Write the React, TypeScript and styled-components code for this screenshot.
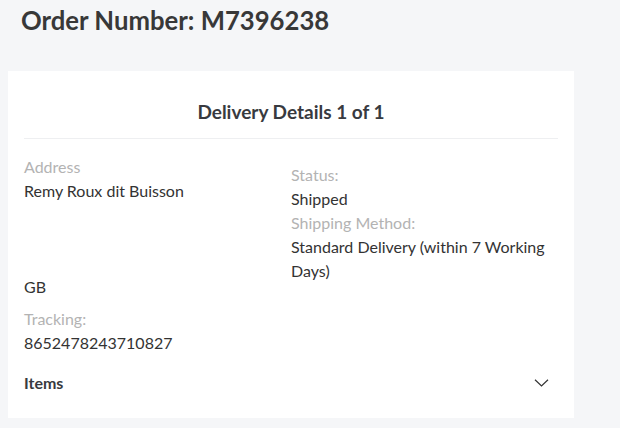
import React from 'react';
import styled, { createGlobalStyle } from 'styled-components';

const GlobalStyle = createGlobalStyle`
	html, body {
		margin: 0;
		padding: 0;
		background: #f5f6f8;
		font-family: Lato, "Open Sans", "Liberation Sans", sans-serif;
		color: #333;
	}
`;

const Page = styled.div`
	width: 620px;
	height: 428px;
	padding: 0 46px 0 8px;
	box-sizing: border-box;
	overflow: hidden;
`;

const Title = styled.h1`
	margin: 0 0 35px;
	padding: 4px 0 0 13px;
	font-size: 25.7px;
	line-height: 32px;
	font-weight: 700;
	color: #383838;
`;

const Card = styled.section`
	background: #fff;
	padding: 29px 16px 0 16px;
	height: 347px;
	box-sizing: border-box;
`;

const CardHeading = styled.h2`
	margin: 0;
	padding: 0 0 14px;
	border-bottom: 1px solid #eeeff1;
	text-align: center;
	font-size: 19px;
	line-height: 24px;
	font-weight: 700;
	color: #383a40;
`;

const Body = styled.div`
	padding: 16px 0 0;
`;

const Columns = styled.div`
	display: grid;
	grid-template-columns: 1fr 1fr;
`;

const Column = styled.div<{ $offset?: number }>`
	margin-top: ${(p) => p.$offset || 0}px;
`;

const Label = styled.div`
	font-size: 16px;
	line-height: 24px;
	color: #b3b3b3;
`;

const Value = styled.div`
	font-size: 16px;
	line-height: 24px;
	color: #333;
	min-height: 24px;
`;

const Block = styled.div<{ $gap?: number }>`
	margin-top: ${(p) => p.$gap || 0}px;
`;

const ItemsRow = styled.div`
	display: flex;
	align-items: center;
	justify-content: space-between;
	margin-top: 16px;
	padding-right: 9px;
`;

const ItemsTitle = styled.span`
	font-size: 16px;
	line-height: 24px;
	font-weight: 700;
	color: #383a40;
`;

const Chevron = () => (
	<svg width='15' height='8' viewBox='0 0 15 8' fill='none'>
		<polyline points='1,0.8 7.5,7 14,0.8' stroke='#333' strokeWidth='1.2' />
	</svg>
);

const addressLines = ['Remy Roux dit Buisson', '', '', '', 'GB'];

const App: React.FC = () => {
	return (
		<Page>
			<GlobalStyle />
			<Title>Order Number: M7396238</Title>
			<Card>
				<CardHeading>Delivery Details 1 of 1</CardHeading>
				<Body>
					<Columns>
						<Column>
							<Label>Address</Label>
							{addressLines.map((line, index) => (
								<Value key={index}>{line}</Value>
							))}
							<Block $gap={8}>
								<Label>Tracking:</Label>
								<Value>8652478243710827</Value>
							</Block>
						</Column>
						<Column $offset={8}>
							<Label>Status:</Label>
							<Value>Shipped</Value>
							<Label>Shipping Method:</Label>
							<Value>Standard Delivery (within 7 Working Days)</Value>
						</Column>
					</Columns>
					<ItemsRow>
						<ItemsTitle>Items</ItemsTitle>
						<Chevron />
					</ItemsRow>
				</Body>
			</Card>
		</Page>
	);
};

export default App;
